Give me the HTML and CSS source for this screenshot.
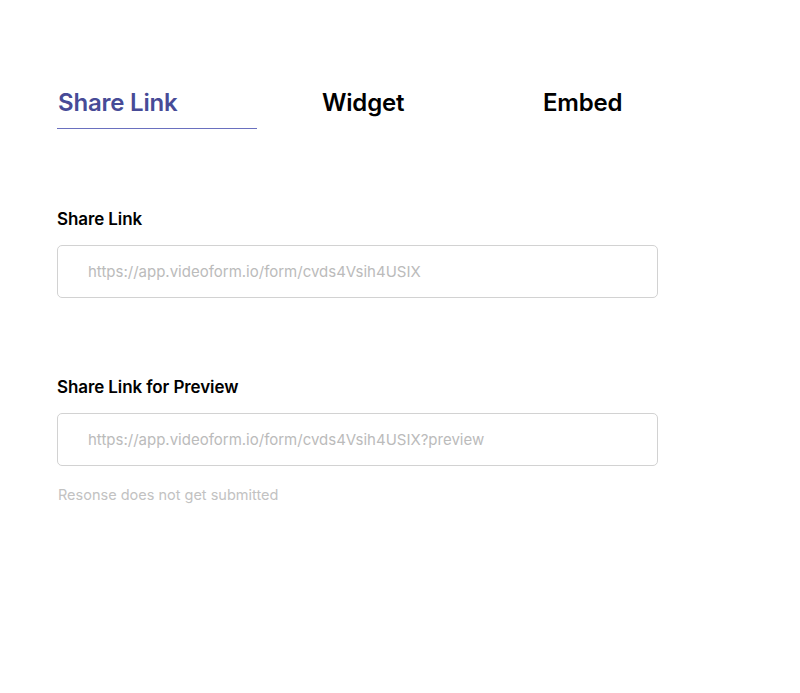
FILE: index.html
```html
<!DOCTYPE html>
<html lang="en">
<head>
<meta charset="utf-8">
<title>Share</title>
<link rel="stylesheet" href="styles.css">
</head>
<body>
<div class="page">
  <nav class="tabs">
    <div class="tab tab-active">Share Link</div>
    <div class="tab tab-widget">Widget</div>
    <div class="tab">Embed</div>
  </nav>
  <section class="field field-first">
    <label class="label">Share Link</label>
    <div class="input">https://app.videoform.io/form/cvds4Vsih4USIX</div>
  </section>
  <section class="field field-second">
    <label class="label">Share Link for Preview</label>
    <div class="input">https://app.videoform.io/form/cvds4Vsih4USIX?preview</div>
    <p class="hint">Resonse does not get submitted</p>
  </section>
</div>
</body>
</html>
```
FILE: styles.css
```css
* { box-sizing: border-box; }
html, body { margin: 0; padding: 0; background: #fff; }
body { font-family: Inter, "Noto Sans", sans-serif; color: #000; }
.page { padding: 86px 0 0 57px; width: 800px; height: 693px; }
.tabs { display: flex; align-items: flex-start; }
.tab {
  font-size: 24px; font-weight: 600; letter-spacing: -0.2px;
  line-height: 34px; height: 43px; color: #000; padding-left: 1px;
}
.tab-active {
  width: 200px; margin-right: 64px; color: #474b97;
  border-bottom: 1.5px solid #6a70bf;
}
.tab-widget { width: 221px; }
.field { display: flex; flex-direction: column; width: 601px; }
.field-first { margin-top: 79px; }
.field-second { margin-top: 78px; }
.label { font-size: 17px; font-weight: 600; letter-spacing: -0.1px; line-height: 22px; }
.input {
  margin-top: 15px; height: 53px; border: 1px solid #d2d2d2; border-radius: 5px;
  padding-left: 30px; display: flex; align-items: center;
  font-size: 15px; color: #bbbbbb; letter-spacing: 0;
}
.hint { margin: 20px 0 0 1px; font-size: 14.5px; color: #c2c2c2; letter-spacing: 0; }
```
